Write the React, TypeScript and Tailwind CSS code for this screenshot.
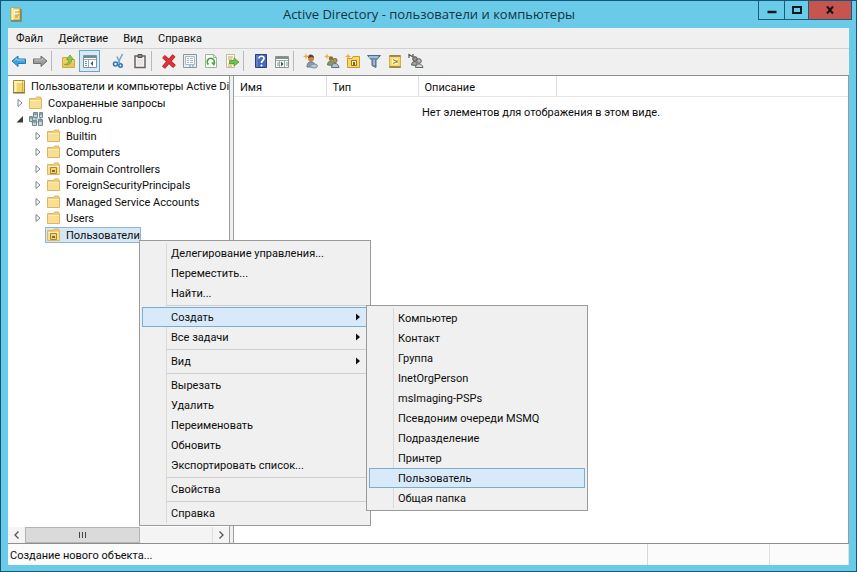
import { useState } from 'react';
import type { ReactNode } from 'react';
import clsx from 'clsx';

interface IconProps {
  children: ReactNode;
}

function Icon({ children }: IconProps) {
  return (
    <svg className="w-4 h-4 shrink-0" viewBox="0 0 16 16" fill="none" aria-hidden="true">
      {children}
    </svg>
  );
}

const FolderIcon = ({ unit = false }: { unit?: boolean }) => (
  <Icon>
    <path d="M1.500 3.500h6l1-1.500h4v1.500h1v10h-12z" fill="#f0cf73" stroke="#dbb75f" />
    <path d="M2 5.500h11v7.500H2z" fill="#f9df93" />
    <path d="M2 5.500h11" stroke="#fdf0c0" />
    {unit && (
      <>
        <path d="M4.500 6.500h6v6h-6z" fill="#f6d472" stroke="#a8862c" />
        <path d="M6 9h3v2H6z" fill="#7e6a35" />
      </>
    )}
  </Icon>
);

const ConsoleIcon = () => (
  <Icon>
    <path d="M2.500 2.500h11v12h-11z" fill="#eed66a" stroke="#a88b35" />
    <path d="M3 3h10v2H3z" fill="#fbf3b8" />
    <path d="M4.500 5v9" stroke="#fff6c2" strokeWidth="2" />
    <path d="M11.500 3v11" stroke="#cfae4a" />
    <path d="M2 15h12" stroke="#77672f" />
  </Icon>
);

const TitleIcon = () => (
  <Icon>
    <path d="M3 2h9v12H3z" fill="#f5e089" stroke="#c49b35" />
    <path d="M6 4h4v5H6z" fill="#fffbe1" />
    <path d="M4.500 2v12" stroke="#fff3ac" strokeWidth="2" />
    <path d="M7 6h4M7 9h4M7 11h3" stroke="#c28b28" />
    <path d="M3 15h11M13 3v11" stroke="#735d35" />
  </Icon>
);

const DomainIcon = () => (
  <Icon>
    <path d="M3 5v6h10V5M8 3v11M3 8h10" stroke="#8ba3a8" />
    <path d="M5.500 1.500h4v5h-4zM1.500 5.500h3v5h-3zM11.500 1.500h3v5h-3zM10.500 8.500h4v6h-4zM4.500 9.500h4v5h-4z" fill="#c9d6d8" stroke="#738a91" />
    <path d="M6 3h3M12 3h2M11 10h3M5 11h3M2 7h2" stroke="#4e6b75" />
  </Icon>
);

const BackIcon = () => (
  <Icon>
    <path d="M1 8l6-5v3h7.500v4.500H7v3z" fill="#3fa2df" stroke="#2877b0" strokeLinejoin="round" />
    <path d="M3.500 7.500L6 5.500V7h7.500" stroke="#91d4f6" />
  </Icon>
);

const ForwardIcon = () => (
  <Icon>
    <path d="M15 8L9 3v3H1.500v4.500H9v3z" fill="#9c9c9c" stroke="#6e6e6e" strokeLinejoin="round" />
    <path d="M2.500 7h7.500V5.500l2.500 2" stroke="#c4c4c4" />
  </Icon>
);

const UpIcon = () => (
  <Icon>
    <path d="M1.500 4.500h5l1 2h6v8h-12z" fill="#f2cf62" stroke="#cfa94a" />
    <path d="M2 10h11v4H2z" fill="#ecc55a" />
    <path d="M3.500 11.500c3 0 4-2 4-5H5.500L9 2l3.500 4.500h-2c0 4-2.500 6-7 5z" fill="#8fc64a" stroke="#6a9f38" strokeWidth=".8" />
  </Icon>
);

const PanesIcon = () => (
  <Icon>
    <path d="M1.500 2.500h13v12h-13z" fill="#fff" stroke="#81909c" />
    <path d="M2 4h12" stroke="#738799" strokeWidth="2" />
    <path d="M2 6.500h12M6.500 7v7" stroke="#9aa8b4" />
    <path d="M3 8.500h2M3 10.500h2M3 12.500h2" stroke="#6f91b3" />
    <path d="M11 8v5L8.500 10.500z" fill="#355878" />
  </Icon>
);

const CutIcon = () => (
  <Icon>
    <path d="M11.500 1L7 10M6 3.500l3 7" stroke="#6fa5cc" strokeWidth="1.500" />
    <circle cx="4.500" cy="11" r="2" stroke="#2f76b5" strokeWidth="1.600" />
    <circle cx="9.500" cy="12.500" r="1.700" stroke="#2f76b5" strokeWidth="1.600" />
  </Icon>
);

const ClipboardIcon = () => (
  <Icon>
    <path d="M3 3h10v11.500H3z" fill="#f2f1ef" stroke="#6e605c" strokeWidth="1.500" />
    <path d="M6 1.500h4v3H6z" fill="#8c8682" stroke="#57504d" />
    <path d="M5 7h6M5 9h6M5 11h6" stroke="#dddbd8" />
  </Icon>
);

const DeleteIcon = () => (
  <Icon>
    <path d="M2.500 3.500l11 10M13 2.500l-10.500 12" stroke="#b01e1e" strokeWidth="4" />
    <path d="M2.500 3.500l11 10M13 2.500l-10.500 12" stroke="#e03535" strokeWidth="2.400" />
  </Icon>
);

const PropertiesIcon = () => (
  <Icon>
    <path d="M1.500 1.500h13v13h-13z" fill="#e9eff3" stroke="#8498a6" />
    <path d="M3.500 3.500h9v8h-9z" fill="#fff" stroke="#a9b9c3" />
    <path d="M5 5.500h2M8 5.500h3M5 7.500h2M8 7.500h3M5 9.500h2M8 9.500h3" stroke="#9cb4c5" />
    <path d="M7 13h2M10 13h2" stroke="#7890a0" />
  </Icon>
);

const RefreshIcon = () => (
  <Icon>
    <path d="M2.500 1.500h8l3 3v10h-11z" fill="#fbfdf9" stroke="#a2b39c" />
    <path d="M10.500 1.500v3h3" stroke="#a2b39c" />
    <path d="M5.500 11.500a3.500 3.500 0 1 1 5-.5" stroke="#4ba544" strokeWidth="1.700" />
    <path d="M8 9.500h4.500L11 13z" fill="#4ba544" />
  </Icon>
);

const ExportIcon = () => (
  <Icon>
    <path d="M2.500 1.500h8v13h-8z" fill="#fffbe2" stroke="#c6bb89" />
    <path d="M4 4h5M4 6h4M4 11h5M4 13h4" stroke="#aca77f" />
    <path d="M5.500 7.500H10V5l5 4-5 4v-2.500H5.500z" fill="#72c14a" stroke="#4b9a31" strokeWidth=".8" />
  </Icon>
);

const HelpIcon = () => (
  <Icon>
    <path d="M2.500 1.500h11v13h-11z" fill="#4969b8" stroke="#263f85" />
    <path d="M4 2v12" stroke="#8198d6" />
    <path d="M6 5.500c0-3 5-3 5 0C11 7.500 8.500 7.500 8.500 10" stroke="#fff" strokeWidth="1.700" />
    <circle cx="8.500" cy="12.500" r="1.100" fill="#fff" />
  </Icon>
);

const ViewIcon = () => (
  <Icon>
    <path d="M1.500 3.500h13v11h-13z" fill="#fff" stroke="#87958f" />
    <path d="M2 5h12" stroke="#7e908c" strokeWidth="2" />
    <path d="M2 7.500h12M10.500 8v6M5.500 8v6" stroke="#9ba8a4" />
    <path d="M7 8.500v5L9.500 11z" fill="#34523c" />
    <path d="M12 10h2M12 12h2M3 10h2M3 12h2" stroke="#6d9a7b" />
  </Icon>
);

const UserIcon = () => (
  <Icon>
    <path d="M4 14c0-5 3.500-6.500 6-4.500 2 1 3 2 3 4.500z" fill="#8d9aa6" stroke="#6b7985" />
    <circle cx="8" cy="5.500" r="3" fill="#c68654" />
    <path d="M5 5c0-5 6-4 6 0L9 4z" fill="#684022" />
    <path d="M3 .5l.8 2L6 3.500 3.800 4.300 3 6.500l-.8-2.200L0 3.500l2.200-1z" fill="#f0a83c" />
    <ellipse cx="11" cy="13" rx="3.500" ry="2" fill="#b8c8d5" stroke="#7d90a1" />
  </Icon>
);

const GroupIcon = () => (
  <Icon>
    <circle cx="7" cy="5.500" r="2.200" fill="#887039" />
    <circle cx="11" cy="7.500" r="2.200" fill="#b49450" stroke="#59532e" strokeWidth=".6" />
    <path d="M3.500 12c0-5 5-5 6-1.500v2z" fill="#869b5f" stroke="#59683d" strokeWidth=".8" />
    <path d="M7.500 14.500c0-5 6.500-6 7.500 0z" fill="#b2c2ce" stroke="#5f7180" />
    <path d="M3 .5l.8 2L6 3.500 3.800 4.300 3 6.500l-.8-2.200L0 3.500l2.200-1z" fill="#f0b23c" />
  </Icon>
);

const NewUnitIcon = () => (
  <Icon>
    <path d="M2.500 5.500H7l1-2h6.500v11h-12z" fill="#f7d964" stroke="#c29d37" />
    <path d="M6.500 7.500h5v5h-5z" fill="#fff0a0" stroke="#8f7430" />
    <path d="M8 9h2v3H8z" fill="#76642d" />
    <path d="M3 .5l.8 2L6 3.500 3.800 4.300 3 6.500l-.8-2.200L0 3.500l2.200-1z" fill="#f0a83c" />
  </Icon>
);

const FilterIcon = () => (
  <Icon>
    <path d="M1.500 2.500h13L10 7.500v7l-4-2v-5z" fill="#7090ac" stroke="#4f6b85" />
    <path d="M3 4h9M8 7v5" stroke="#b3cbdc" strokeWidth="1.400" />
  </Icon>
);

const FindIcon = () => (
  <Icon>
    <path d="M2.500 2.500h11v12h-11z" fill="#f4d970" stroke="#cfae4c" />
    <path d="M2.500 3h11M2.500 14h11" stroke="#8e7936" strokeWidth="1.500" />
    <path d="M5 5.500h6v6H5z" fill="#fff6c0" />
    <path d="M6 6.500l4 2L6 10.500M10 7v3" stroke="#96772d" />
  </Icon>
);

const MembersIcon = () => (
  <Icon>
    <path d="M1 5V1.500L5 4V1" stroke="#4d5255" strokeWidth="1.200" />
    <circle cx="7" cy="6" r="2.300" fill="#92948d" stroke="#505450" />
    <circle cx="11" cy="8" r="2.300" fill="#b7bab5" stroke="#5b605c" />
    <path d="M3.500 12c0-4 4.500-4.500 5.500-1.500v2z" fill="#a3a79d" stroke="#555b54" />
    <path d="M7.500 14.500c0-4.500 6.500-5 7.500 0z" fill="#d2d6d8" stroke="#5f686c" />
  </Icon>
);

interface Tool {
  label: string;
  icon: ReactNode;
  active?: boolean;
}

const toolGroups: Tool[][] = [
  [
    { label: 'Назад', icon: <BackIcon /> },
    { label: 'Вперед', icon: <ForwardIcon /> },
  ],
  [
    { label: 'Вверх', icon: <UpIcon /> },
    { label: 'Дерево консоли', icon: <PanesIcon />, active: true },
  ],
  [
    { label: 'Вырезать', icon: <CutIcon /> },
    { label: 'Вставить', icon: <ClipboardIcon /> },
  ],
  [
    { label: 'Удалить', icon: <DeleteIcon /> },
    { label: 'Свойства', icon: <PropertiesIcon /> },
    { label: 'Обновить', icon: <RefreshIcon /> },
    { label: 'Экспортировать список', icon: <ExportIcon /> },
  ],
  [
    { label: 'Справка', icon: <HelpIcon /> },
    { label: 'Область действий', icon: <ViewIcon /> },
  ],
  [
    { label: 'Создать пользователя', icon: <UserIcon /> },
    { label: 'Создать группу', icon: <GroupIcon /> },
    { label: 'Создать подразделение', icon: <NewUnitIcon /> },
    { label: 'Фильтр', icon: <FilterIcon /> },
    { label: 'Найти', icon: <FindIcon /> },
    { label: 'Добавить в группу', icon: <MembersIcon /> },
  ],
];

interface TreeNode {
  name: string;
  level: number;
  icon: ReactNode;
  state?: 'open' | 'closed';
}

const treeNodes: TreeNode[] = [
  { name: 'Пользователи и компьютеры Active Di', level: 0, icon: <ConsoleIcon /> },
  { name: 'Сохраненные запросы', level: 1, icon: <FolderIcon />, state: 'closed' },
  { name: 'vlanblog.ru', level: 1, icon: <DomainIcon />, state: 'open' },
  { name: 'Builtin', level: 2, icon: <FolderIcon />, state: 'closed' },
  { name: 'Computers', level: 2, icon: <FolderIcon />, state: 'closed' },
  { name: 'Domain Controllers', level: 2, icon: <FolderIcon unit />, state: 'closed' },
  { name: 'ForeignSecurityPrincipals', level: 2, icon: <FolderIcon />, state: 'closed' },
  { name: 'Managed Service Accounts', level: 2, icon: <FolderIcon />, state: 'closed' },
  { name: 'Users', level: 2, icon: <FolderIcon />, state: 'closed' },
  { name: 'Пользователи', level: 2, icon: <FolderIcon unit /> },
];

const levelPadding = ['pl-0.5', 'pl-[7px]', 'pl-[25px]'];

interface MenuEntry {
  label: string;
  submenu?: boolean;
}

const contextGroups: MenuEntry[][] = [
  [{ label: 'Делегирование управления...' }, { label: 'Переместить...' }, { label: 'Найти...' }],
  [{ label: 'Создать', submenu: true }, { label: 'Все задачи', submenu: true }],
  [{ label: 'Вид', submenu: true }],
  [
    { label: 'Вырезать' },
    { label: 'Удалить' },
    { label: 'Переименовать' },
    { label: 'Обновить' },
    { label: 'Экспортировать список...' },
  ],
  [{ label: 'Свойства' }],
  [{ label: 'Справка' }],
];

const createGroups: MenuEntry[][] = [
  [
    { label: 'Компьютер' },
    { label: 'Контакт' },
    { label: 'Группа' },
    { label: 'InetOrgPerson' },
    { label: 'msImaging-PSPs' },
    { label: 'Псевдоним очереди MSMQ' },
    { label: 'Подразделение' },
    { label: 'Принтер' },
    { label: 'Пользователь' },
    { label: 'Общая папка' },
  ],
];

interface PopupMenuProps {
  groups: MenuEntry[][];
  label: string;
  current: string;
  onSelect: (label: string) => void;
  className: string;
}

function PopupMenu({ groups, label, current, onSelect, className }: PopupMenuProps) {
  return (
    <div
      role="menu"
      aria-label={label}
      className={clsx('absolute border border-[#9b9b9b] bg-[#f0f0f0] p-0.5', className)}
    >
      {groups.map((group, index) => (
        <div key={index}>
          {index > 0 && (
            <div className="flex h-1 items-center">
              <div className="h-1 w-[25px] border-r border-[#d9d9d9]" />
              <div className="h-px flex-1 bg-[#cfcfcf]" />
            </div>
          )}
          {group.map((entry) => (
            <button
              key={entry.label}
              role="menuitem"
              onClick={() => onSelect(entry.label)}
              className={clsx(
                'flex h-5 w-full items-center border pr-1.5 text-left',
                entry.label === current ? 'border-[#78aed0] bg-[#d8eafa]' : 'border-transparent',
              )}
            >
              <span
                className={clsx(
                  'h-5 w-6 shrink-0 border-r',
                  entry.label === current ? 'border-transparent' : 'border-[#d9d9d9]',
                )}
              />
              <span className="flex-1 pl-1 pt-0.5">{entry.label}</span>
              {entry.submenu && (
                <svg className="h-2 w-1.5" viewBox="0 0 6 8" aria-hidden="true">
                  <path d="M1 0.500v7L5 4z" fill="#111" />
                </svg>
              )}
            </button>
          ))}
        </div>
      ))}
    </div>
  );
}

export default function App() {
  const [selected, setSelected] = useState('Пользователи');
  const [contextItem, setContextItem] = useState('Создать');
  const [createItem, setCreateItem] = useState('Пользователь');

  return (
    <div className="relative flex h-screen flex-col overflow-hidden border border-[#125777] bg-[#6acbe9] px-[7px] pb-1.5 font-[Roboto,'Noto_Sans',sans-serif] text-[11px] leading-4 text-[#0c0c0c]">
      {/* Title bar */}
      <header className="-mr-[3px] flex h-[27px] shrink-0 items-start">
        <div className="flex w-[92px] items-center pt-[5px]">
          <TitleIcon />
        </div>
        <h1 className="flex-1 pt-[3px] text-center font-['Open_Sans','Noto_Sans',sans-serif] text-[13px] leading-5 text-[#16323f]">
          Active Directory - пользователи и компьютеры
        </h1>
        <div className="flex h-[19px] border border-t-0 border-[#1d5b78]">
          <button aria-label="Свернуть" className="flex w-[26px] items-center justify-center border-r border-[#1d5b78]">
            <svg className="h-2.5 w-2.5" viewBox="0 0 10 10" aria-hidden="true">
              <path d="M0.500 7h9" stroke="#0d1a22" strokeWidth="2.500" />
            </svg>
          </button>
          <button aria-label="Развернуть" className="flex w-6 items-center justify-center border-r border-[#1d5b78]">
            <svg className="h-2.5 w-2.5" viewBox="0 0 10 10" fill="none" aria-hidden="true">
              <path d="M1 2h8v6H1z" stroke="#0d1a22" strokeWidth="2" />
            </svg>
          </button>
          <button aria-label="Закрыть" className="flex w-[42px] items-center justify-center bg-[#c7554f]">
            <svg className="h-2.5 w-2.5" viewBox="0 0 10 10" aria-hidden="true">
              <path d="M2 1.500l6 7M8 1.500l-6 7" stroke="#1b0f10" strokeWidth="2" />
            </svg>
          </button>
        </div>
      </header>

      <main className="flex min-h-0 flex-1 flex-col bg-[#f0f0f0]">
        <nav className="flex h-[21px] shrink-0 items-center gap-[15px] border-b border-[#d2d2d2] pl-2 pt-0.5">
          {['Файл', 'Действие', 'Вид', 'Справка'].map((item) => (
            <button key={item}>{item}</button>
          ))}
        </nav>

        {/* Toolbar */}
        <div className="flex h-[26px] shrink-0 items-center pb-0.5">
          {toolGroups.map((group, index) => (
            <div key={index} className="flex items-center">
              {index > 0 && (
                <div className="w-2 pl-px">
                  <div className={clsx('h-5 w-px', index === 2 ? 'bg-transparent' : 'bg-[#b9b9b9]')} />
                </div>
              )}
              {group.map((tool) => (
                <button
                  key={tool.label}
                  aria-label={tool.label}
                  className={clsx(
                    'flex h-[22px] w-[21px] items-center justify-center',
                    tool.active && 'border border-[#69a5cb] bg-[#d6e9f5]',
                  )}
                >
                  {tool.icon}
                </button>
              ))}
            </div>
          ))}
        </div>

        <div className="flex min-h-0 flex-1 gap-[3px] border-y border-[#8b8f91]">
          {/* Console tree */}
          <aside className="flex w-[222px] shrink-0 flex-col border-r border-[#9a9da0] bg-white">
            <div role="tree" className="grid h-[167px] auto-rows-fr overflow-hidden pt-0.5">
              {treeNodes.map((node) => (
                <div
                  key={node.name}
                  role="treeitem"
                  aria-selected={selected === node.name}
                  onClick={() => setSelected(node.name)}
                  className={clsx('flex items-center whitespace-nowrap', levelPadding[node.level])}
                >
                  {node.level > 0 && (
                    <svg className="mr-0.5 h-2.5 w-2.5 shrink-0" viewBox="0 0 10 10" aria-hidden="true">
                      {node.state === 'closed' && <path d="M3 1.500v7L7 5z" fill="#fff" stroke="#7d8490" />}
                      {node.state === 'open' && <path d="M8 2v6.500H1.500z" fill="#3c3c3c" />}
                    </svg>
                  )}
                  <span
                    className={clsx(
                      'flex h-4 items-center border',
                      selected === node.name ? 'border-[#8fb6d6] bg-[#d5e6f5]' : 'border-transparent',
                    )}
                  >
                    {node.icon}
                    <span className="pl-1 pt-0.5">{node.name}</span>
                  </span>
                </div>
              ))}
            </div>
            {/* Horizontal scroll bar */}
            <div className="mt-auto flex h-4 shrink-0 bg-[#f4f4f4]">
              <button aria-label="Прокрутить влево" className="flex w-[17px] items-center justify-center">
                <svg className="h-2 w-2" viewBox="0 0 8 8" fill="none" aria-hidden="true">
                  <path d="M5.500 0.500L2 4l3.500 3.500" stroke="#555" strokeWidth="1.300" />
                </svg>
              </button>
              <div className="flex w-[115px] items-center justify-center gap-0.5 border border-[#b4b4b4] bg-[#dadada]">
                <span className="h-1.5 w-px bg-[#444]" />
                <span className="h-1.5 w-px bg-[#444]" />
                <span className="h-1.5 w-px bg-[#444]" />
              </div>
              <button aria-label="Прокрутить вправо" className="ml-auto flex w-[17px] items-center justify-center border-l border-[#dedede]">
                <svg className="h-2 w-2" viewBox="0 0 8 8" fill="none" aria-hidden="true">
                  <path d="M2.500 0.500L6 4 2.500 7.500" stroke="#555" strokeWidth="1.300" />
                </svg>
              </button>
            </div>
          </aside>

          {/* Object list */}
          <section className="min-w-0 flex-1 border-x border-[#9a9da0] bg-white">
            <table className="w-full table-fixed border-collapse text-left">
              <thead>
                <tr className="h-5 border-b border-[#e5e5e5]">
                  <th className="w-[92px] border-r border-[#dedede] pl-1.5 pt-1 font-normal">Имя</th>
                  <th className="w-[92px] border-r border-[#dedede] pl-1.5 pt-1 font-normal">Тип</th>
                  <th className="w-[138px] border-r border-[#dedede] pl-1.5 pt-1 font-normal">Описание</th>
                  <td />
                </tr>
              </thead>
              <tbody>
                <tr>
                  <td colSpan={4} className="pt-2 text-center">
                    Нет элементов для отображения в этом виде.
                  </td>
                </tr>
              </tbody>
            </table>
          </section>
        </div>

        <footer className="flex h-[21px] shrink-0 items-center bg-[#fbfbfb]">
          <span className="flex-1 pl-0.5 pt-0.5">Создание нового объекта...</span>
          <span className="h-full w-[122px] border-l border-[#d8d8d8]" />
          <span className="h-full w-20 border-x border-[#e0e0e0]" />
        </footer>
      </main>

      <PopupMenu
        groups={contextGroups}
        label="Пользователи"
        current={contextItem}
        onSelect={setContextItem}
        className="left-[138px] top-[239px] w-[232px]"
      />
      {contextItem === 'Создать' && (
        <PopupMenu
          groups={createGroups}
          label="Создать"
          current={createItem}
          onSelect={setCreateItem}
          className="left-[365px] top-[304px] w-[222px]"
        />
      )}
    </div>
  );
}
